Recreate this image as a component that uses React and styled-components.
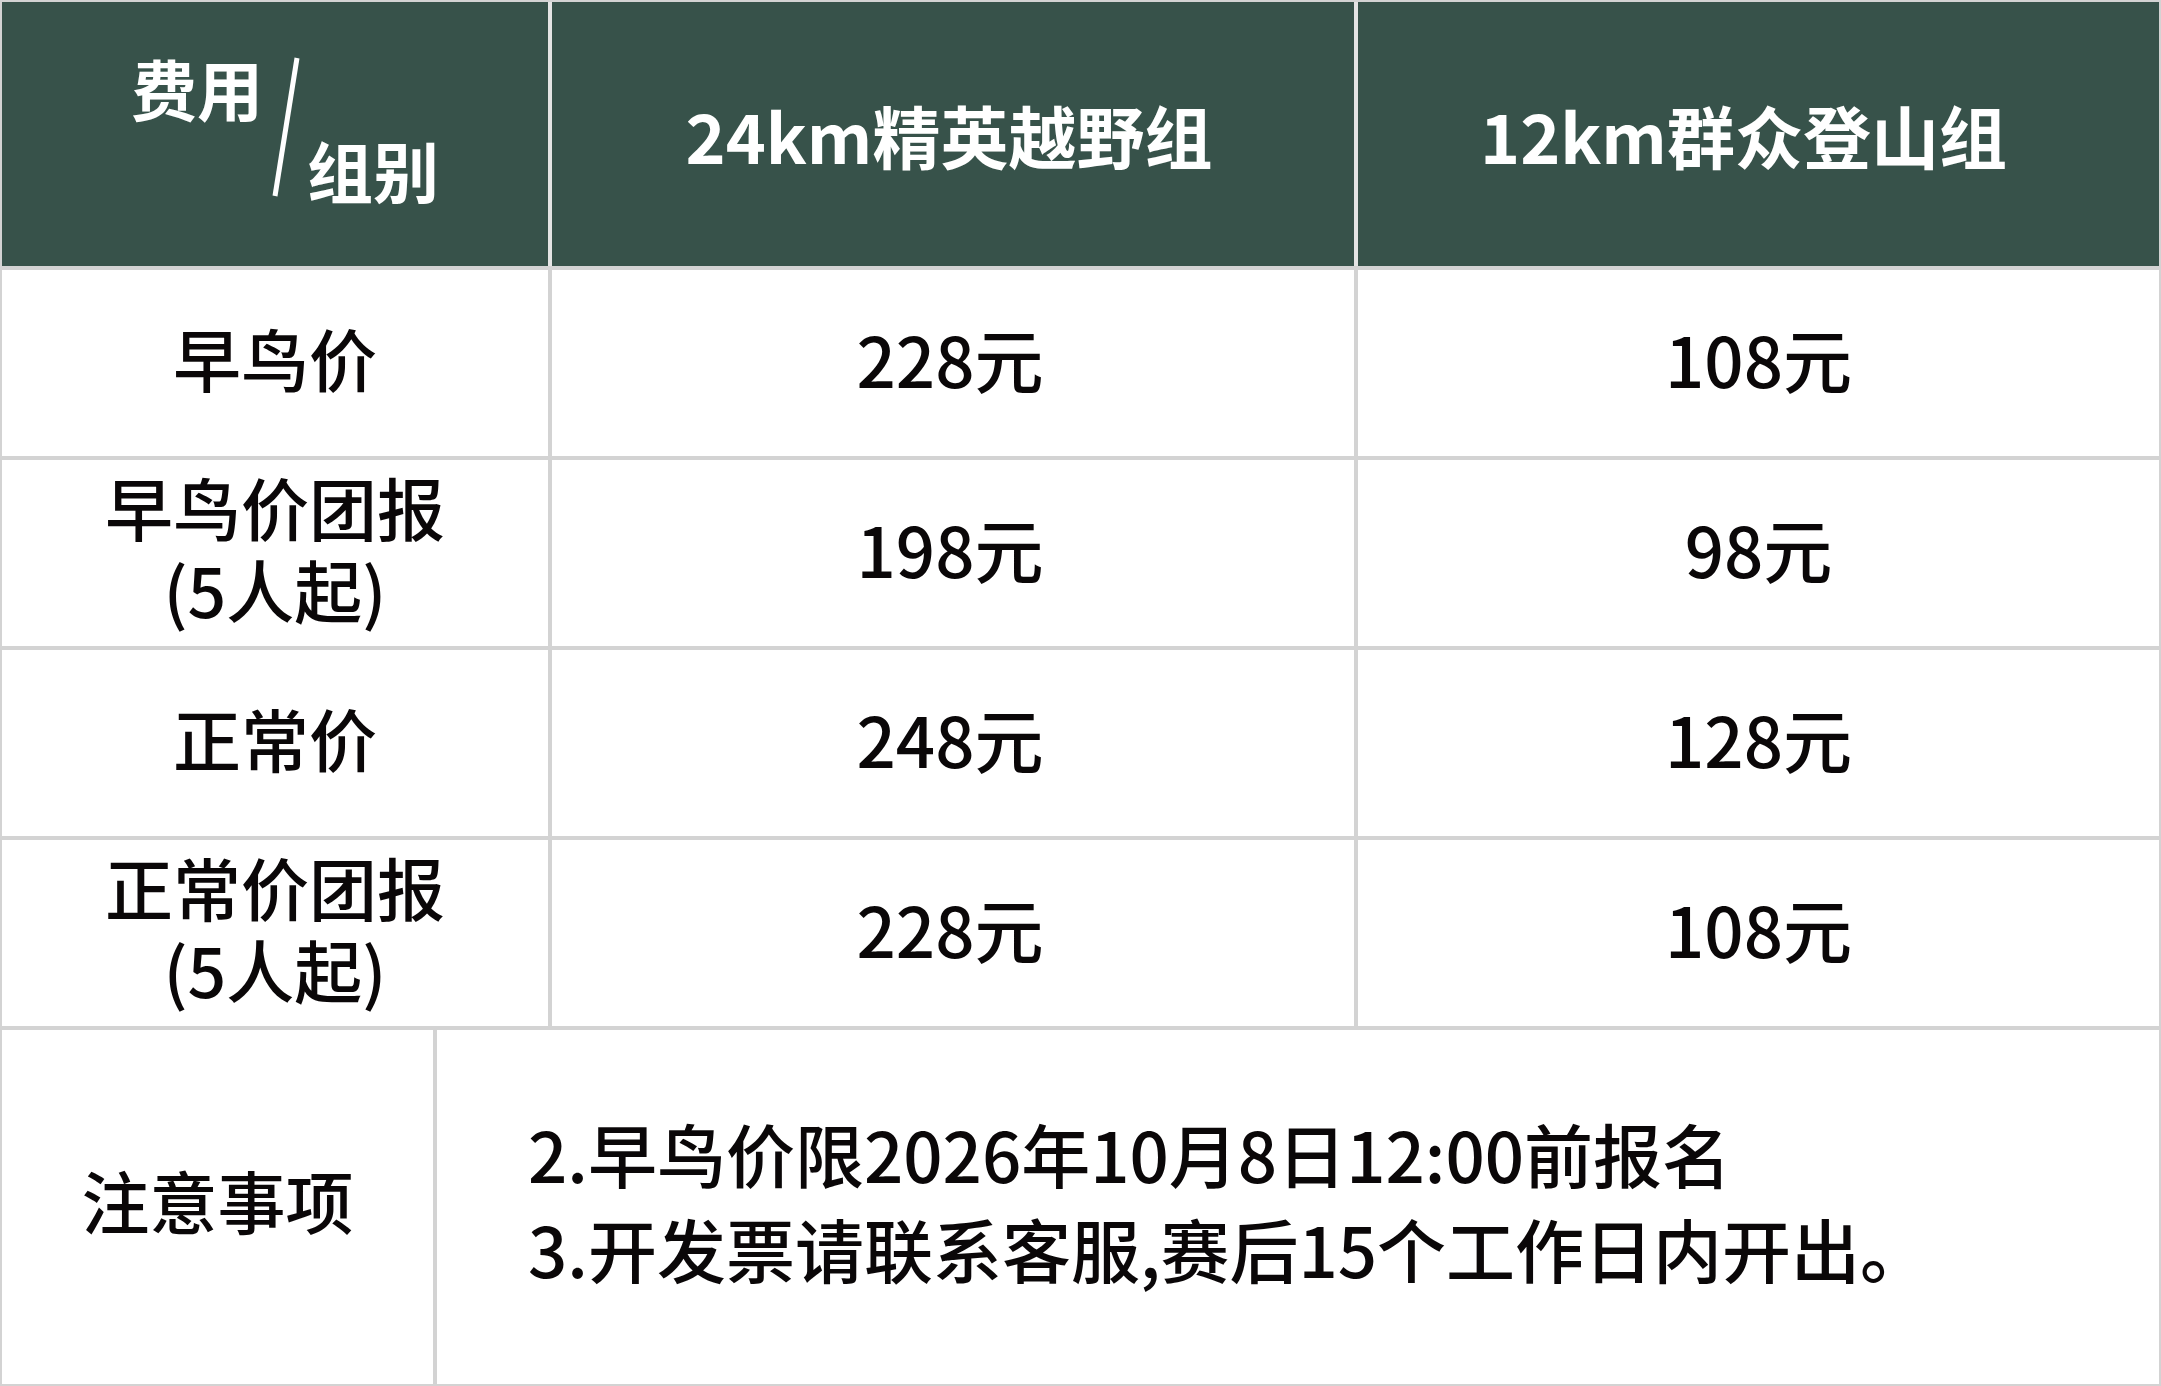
import React from 'react';
import styled, { createGlobalStyle } from 'styled-components';

const GlobalStyle = createGlobalStyle`
    html, body {
        margin: 0;
        padding: 0;
        background: #ffffff;
    }
    body {
        font-family: "Noto Sans CJK SC", "Noto Sans", sans-serif;
        color: #0a0708;
    }
`;

const Sheet = styled.div`
    width: 2161px;
    box-sizing: border-box;
    padding: 2px;
    background: #d3d3d3;
    display: flex;
    flex-direction: column;
    gap: 4px;
`;

const PriceGrid = styled.div`
    display: grid;
    grid-template-columns: 546px 802px 1fr;
    grid-template-rows: 264px repeat(4, 186px);
    gap: 4px;
`;

const HeadCell = styled.div`
    background: #37524a;
    color: #ffffff;
    font-weight: 700;
    font-size: 68px;
    display: flex;
    align-items: center;
    justify-content: center;
    padding-right: ${p => p.$shift || 0}px;
    box-shadow: ${p => (p.$first ? 'none' : '-4px 0 0 #e4e4e4')};
`;

const CornerLabel = styled.div`
    height: 148px;
    display: flex;
    align-items: stretch;
    gap: 4px;
    margin-left: 20px;
    margin-bottom: 12px;
    font-size: 66px;
    line-height: 1;
`;

const CornerTop = styled.span`
    align-self: flex-start;
`;

const CornerBottom = styled.span`
    align-self: flex-end;
`;

const Cell = styled.div`
    background: #ffffff;
    display: flex;
    flex-direction: column;
    align-items: center;
    justify-content: center;
    box-sizing: border-box;
    padding-bottom: 10px;
    padding-right: ${p => p.$shift || 0}px;
    font-size: ${p => p.$size || 68}px;
    font-weight: 500;
    line-height: 82px;
    text-align: center;
`;

const NotesRow = styled.div`
    display: grid;
    grid-template-columns: 431px 1fr;
    height: 354px;
    gap: 4px;
`;

const NotesLabel = styled(Cell)`
    padding-bottom: 14px;
`;

const NotesBody = styled.div`
    background: #ffffff;
    display: flex;
    flex-direction: column;
    justify-content: center;
    box-sizing: border-box;
    padding-left: 91px;
    padding-bottom: 12px;
    font-size: 69px;
    font-weight: 500;
    line-height: 95px;
`;

const rows = [
    { label: ['早鸟价'], long: '228元', short: '108元' },
    { label: ['早鸟价团报', '(5人起)'], long: '198元', short: '98元' },
    { label: ['正常价'], long: '248元', short: '128元' },
    { label: ['正常价团报', '(5人起)'], long: '228元', short: '108元' },
];

const notes = [
    '2.早鸟价限2026年10月8日12:00前报名',
    '3.开发票请联系客服,赛后15个工作日内开出。',
];

function Slash()
{
    return (
        <svg width="36" height="148" viewBox="0 0 36 148">
            <line x1="30" y1="4" x2="8" y2="142" stroke="#ffffff" strokeWidth="5" />
        </svg>
    );
}

export default function App()
{
    return (
        <>
            <GlobalStyle />
            <Sheet>
                <PriceGrid>
                    <HeadCell $first>
                        <CornerLabel>
                            <CornerTop>费用</CornerTop>
                            <Slash />
                            <CornerBottom>组别</CornerBottom>
                        </CornerLabel>
                    </HeadCell>
                    <HeadCell $shift={8}>24km精英越野组</HeadCell>
                    <HeadCell $shift={30}>12km群众登山组</HeadCell>

                    {rows.map((row, i) => (
                        <React.Fragment key={i}>
                            <Cell>
                                {row.label.map(line => <span key={line}>{line}</span>)}
                            </Cell>
                            <Cell $size={69} $shift={6}>{row.long}</Cell>
                            <Cell $size={69}>{row.short}</Cell>
                        </React.Fragment>
                    ))}
                </PriceGrid>

                <NotesRow>
                    <NotesLabel>注意事项</NotesLabel>
                    <NotesBody>
                        {notes.map(line => <div key={line}>{line}</div>)}
                    </NotesBody>
                </NotesRow>
            </Sheet>
        </>
    );
}
